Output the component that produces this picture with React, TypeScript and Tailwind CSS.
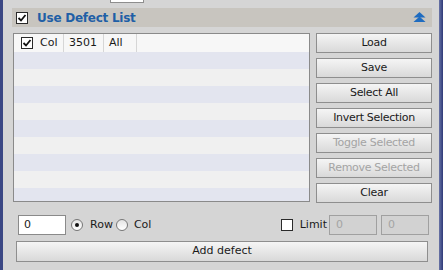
import React from "react";

const font = { fontFamily: '"DejaVu Sans", Verdana, sans-serif' };

function Check({ checked = true }: { checked?: boolean }) {
  return (
    <span className="flex h-[12px] w-[12px] shrink-0 items-center justify-center border border-[#2a2a2a] bg-white">
      {checked && (
        <svg width="10" height="10" viewBox="0 0 10 10">
          <path d="M1.5 5 L4 7.5 L8.5 2" fill="none" stroke="#111" strokeWidth="1.8" />
        </svg>
      )}
    </span>
  );
}

function Radio({ on }: { on?: boolean }) {
  return (
    <span className="flex h-[12px] w-[12px] items-center justify-center rounded-full border border-[#777] bg-gradient-to-b from-[#e4e4e4] to-white">
      {on && <span className="h-[4px] w-[4px] rounded-full bg-[#111]" />}
    </span>
  );
}

function Btn({ label, disabled }: { label: string; disabled?: boolean }) {
  return (
    <div
      className={
        "flex h-[20px] items-center justify-center border border-[#8e8e8e] bg-gradient-to-b from-[#f5f5f5] to-[#d9d9d9] text-[11px] tracking-[-0.3px] " +
        (disabled ? "text-[#a4a4a4]" : "text-[#1a1a1a]")
      }
    >
      {label}
    </div>
  );
}

export default function App() {
  const rows = Array.from({ length: 9 }, (_, i) => i);
  return (
    <div className="flex h-[270px] w-[443px] overflow-hidden bg-[#d5d5d5]" style={font}>
      <div className="w-[3px] shrink-0 bg-[#3b4784]" />
      <div className="flex w-[436px] flex-col">
        {/* cut-off input from above */}
        <div className="ml-[107px] h-[3px] w-[34px] border-x border-b border-[#8e8e8e] bg-white" />

        {/* section header */}
        <div className="ml-[9px] mt-[5px] flex h-[19px] w-[420px] items-center bg-[#c8c5bf] pl-[4px] pr-[6px]">
          <Check />
          <span className="ml-[9px] text-[12px] font-bold tracking-[-0.25px] text-[#1f5fa6]">Use Defect List</span>
          <svg className="ml-auto" width="13" height="11" viewBox="0 0 13 11">
            <path d="M6.5 0 L12.5 5.5 L0.5 5.5 Z" fill="#1f6cc0" />
            <path d="M6.5 4.5 L12.5 10 L0.5 10 Z" fill="#1f6cc0" />
          </svg>
        </div>

        {/* list + buttons */}
        <div className="ml-[10px] mt-[6px] flex gap-[6px]">
          <div className="flex h-[169px] w-[297px] flex-col overflow-hidden border border-[#8a8a8a] bg-[#f2f2f2]">
            <div className="flex h-[18px] shrink-0 items-center bg-[#f7f7f7] text-[11px] text-[#1a1a1a]">
              <div className="flex h-full w-[50px] items-center gap-[7px] border-r border-[#d6d6d6] pl-[7px]">
                <Check />
                <span>Col</span>
              </div>
              <div className="flex h-full w-[40px] items-center border-r border-[#d6d6d6] pl-[5px]">3501</div>
              <div className="flex h-full w-[33px] items-center border-r border-[#d6d6d6] pl-[5px]">All</div>
            </div>
            {rows.map((i) => (
              <div
                key={i}
                className={"h-[17px] shrink-0 " + (i % 2 === 0 ? "bg-[#e3e5ef]" : "bg-[#f0f0f0]")}
              />
            ))}
          </div>
          <div className="flex w-[116px] flex-col gap-[5px]">
            <Btn label="Load" />
            <Btn label="Save" />
            <Btn label="Select All" />
            <Btn label="Invert Selection" />
            <Btn label="Toggle Selected" disabled />
            <Btn label="Remove Selected" disabled />
            <Btn label="Clear" />
          </div>
        </div>

        {/* add defect controls */}
        <div className="ml-[15px] mt-[12px] flex h-[20px] w-[411px] items-center text-[11px] text-[#1a1a1a]">
          <div className="flex h-[20px] w-[48px] items-center border border-[#8a8a8a] bg-white pl-[5px]">0</div>
          <span className="ml-[5px]">
            <Radio on />
          </span>
          <span className="ml-[7px]">Row</span>
          <span className="ml-[3px]">
            <Radio />
          </span>
          <span className="ml-[6px]">Col</span>
          <span className="ml-auto">
            <Check checked={false} />
          </span>
          <span className="ml-[7px]">Limit</span>
          <div className="ml-[2px] flex h-[20px] w-[48px] items-center border border-[#a0a0a0] bg-[#d2d2d2] pl-[6px] text-[#a4a4a4]">0</div>
          <div className="ml-[4px] flex h-[20px] w-[48px] items-center border border-[#a0a0a0] bg-[#d2d2d2] pl-[6px] text-[#a4a4a4]">0</div>
        </div>
        <div className="ml-[13px] mt-[6px] w-[412px]">
          <div className="flex h-[21px] items-center justify-center border border-[#8e8e8e] bg-gradient-to-b from-[#f5f5f5] to-[#d9d9d9] text-[11px] text-[#1a1a1a]">
            Add defect
          </div>
        </div>
      </div>
      <div className="flex-1 bg-gradient-to-r from-[#6a74a6] to-[#2f3a78]" />
    </div>
  );
}
